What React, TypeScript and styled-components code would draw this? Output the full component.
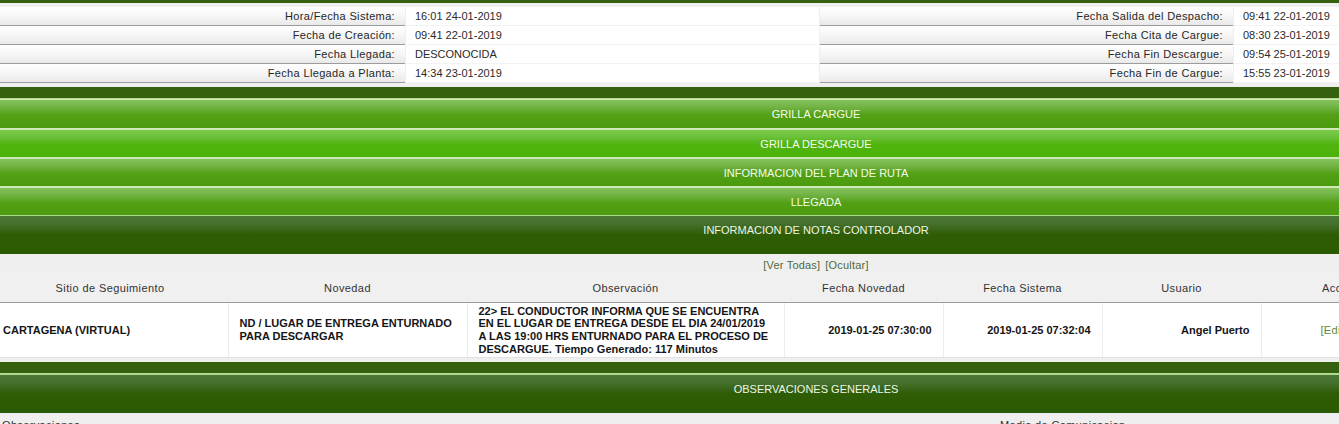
import styled, { createGlobalStyle } from "styled-components";

const GlobalStyle = createGlobalStyle`
  html, body {
    margin: 0;
    padding: 0;
    background: #efefef;
    overflow: hidden;
  }
  body {
    font-family: "Liberation Sans", Arial, sans-serif;
    font-size: 11px;
    color: #333;
  }
`;

const Viewport = styled.div`
  width: 1339px;
  height: 424px;
  overflow: hidden;
`;

// the sheet is wider than the window (the notes table overflows), so
// centred bars are centred on 1632px, not on the viewport
const Sheet = styled.div`
  width: 1632px;
`;

const TopBar = styled.div`
  height: 3px;
  background: #35610f;
  margin-bottom: 4px;
`;

const InfoGrid = styled.div`
  display: grid;
  width: 1339px;
  grid-template-columns: 405px 413px 413px 1fr;
  grid-auto-rows: 19px;
  column-gap: 1px;
  margin-bottom: 4px;
`;

const InfoLabel = styled.div`
  box-sizing: border-box;
  text-align: right;
  padding: 0 10px 0 0;
  line-height: 18px;
  letter-spacing: 0.35px;
  color: #262626;
  background: linear-gradient(to bottom, #ffffff 0%, #f6f6f6 50%, #e9e9e9 100%);
  border-bottom: 1px solid #9c9c9c;
  white-space: nowrap;
`;

const InfoValue = styled.div`
  box-sizing: border-box;
  padding: 0 0 0 9px;
  line-height: 18px;
  color: #2a2a2a;
  background: #fff;
  border-bottom: 1px solid #f3f3f3;
  white-space: nowrap;
`;

const Divider = styled.div`
  height: 11px;
  background: #35610f;
  border-bottom: 1px solid #b4dd92;
`;

const Accordion = styled.div`
  display: flex;
  flex-flow: column nowrap;
`;

const SectionHeader = styled.div<{ $bright?: boolean }>`
  height: 27px;
  line-height: 28px;
  text-align: center;
  color: #f4fcec;
  border-top: 2px solid #cfeab8;
  background: ${p =>
    p.$bright
      ? "linear-gradient(to bottom, #7dca4c 0%, #6cc13a 25%, #4fb30c 55%, #4cb309 100%)"
      : "linear-gradient(to bottom, #85c25c 0%, #72b345 25%, #52a014 55%, #4c9a0e 100%)"};

  &:first-of-type {
    border-top-width: 1px;
    height: 28px;
  }
`;

const DarkHeader = styled.div`
  height: 38px;
  line-height: 28px;
  text-align: center;
  color: #eef6e6;
  border-top: 1px solid #a9d98b;
  background: linear-gradient(to bottom, #4c7835 0%, #467231 18%, #2f5d06 48%, #2a5a01 100%);
`;

const LinksRow = styled.div`
  height: 19px;
  padding-top: 3px;
  box-sizing: border-box;
  line-height: 16px;
  text-align: center;
  color: #4f6a3b;
  letter-spacing: 0.2px;

  span + span {
    margin-left: 5px;
  }
`;

const NotesTable = styled.table`
  margin-left: -8px;
  border-collapse: collapse;
  table-layout: fixed;
  width: 1439px;
`;

const HeadCell = styled.th`
  height: 29px;
  padding: 0;
  font-weight: normal;
  text-align: center;
  letter-spacing: 0.4px;
  color: #333;
  background: #f0f0f0;
  border-bottom: 1px solid #9a9a9a;
  white-space: nowrap;
`;

const DataCell = styled.td<{ $align?: "left" | "right" }>`
  height: 55px;
  padding: 0 11px;
  box-sizing: border-box;
  background: #fff;
  font-weight: bold;
  color: #151515;
  line-height: 12.6px;
  vertical-align: middle;
  text-align: ${p => p.$align ?? "left"};
  border-left: 1px solid #ececec;
  border-bottom: 1px solid #e2e2e2;

  &:first-child {
    border-left: none;
  }
`;

const ActionCell = styled(DataCell)`
  padding-left: 59px;
`;

const EditLink = styled.span`
  font-weight: normal;
  letter-spacing: 0.3px;
  color: #5b8a3c;
`;

const Gap = styled.div`
  height: 4px;
`;

const BottomHead = styled.div`
  display: grid;
  grid-template-columns: 1000px 1fr;
  line-height: 24px;
  letter-spacing: 0.35px;
  color: #333;
  white-space: nowrap;
`;

const BottomCell = styled.div<{ $pad: number }>`
  padding-left: ${p => p.$pad}px;
`;

const leftInfo = [
  ["Hora/Fecha Sistema:", "16:01 24-01-2019"],
  ["Fecha de Creación:", "09:41 22-01-2019"],
  ["Fecha Llegada:", "DESCONOCIDA"],
  ["Fecha Llegada a Planta:", "14:34 23-01-2019"],
];

const rightInfo = [
  ["Fecha Salida del Despacho:", "09:41 22-01-2019"],
  ["Fecha Cita de Cargue:", "08:30 23-01-2019"],
  ["Fecha Fin Descargue:", "09:54 25-01-2019"],
  ["Fecha Fin de Cargue:", "15:55 23-01-2019"],
];

const columns = [236, 239, 317, 159, 159, 159, 170];

function App(): JSX.Element {
  return (
    <Viewport>
      <GlobalStyle />
      <Sheet>
        <TopBar />
        <InfoGrid>
          {leftInfo.flatMap((row, i) => [
            <InfoLabel key={`l${i}`}>{row[0]}</InfoLabel>,
            <InfoValue key={`v${i}`}>{row[1]}</InfoValue>,
            <InfoLabel key={`rl${i}`}>{rightInfo[i][0]}</InfoLabel>,
            <InfoValue key={`rv${i}`}>{rightInfo[i][1]}</InfoValue>,
          ])}
        </InfoGrid>
        <Divider />
        <Accordion>
          <SectionHeader>GRILLA CARGUE</SectionHeader>
          <SectionHeader $bright>GRILLA DESCARGUE</SectionHeader>
          <SectionHeader>INFORMACION DEL PLAN DE RUTA</SectionHeader>
          <SectionHeader>LLEGADA</SectionHeader>
          <DarkHeader>INFORMACION DE NOTAS CONTROLADOR</DarkHeader>
        </Accordion>
        <LinksRow>
          <span>[Ver Todas]</span>
          <span>[Ocultar]</span>
        </LinksRow>
        <NotesTable>
          <colgroup>
            {columns.map((w, i) => (
              <col key={i} style={{ width: w }} />
            ))}
          </colgroup>
          <thead>
            <tr>
              <HeadCell>Sitio de Seguimiento</HeadCell>
              <HeadCell>Novedad</HeadCell>
              <HeadCell>Observación</HeadCell>
              <HeadCell>Fecha Novedad</HeadCell>
              <HeadCell>Fecha Sistema</HeadCell>
              <HeadCell>Usuario</HeadCell>
              <HeadCell>Acciones</HeadCell>
            </tr>
          </thead>
          <tbody>
            <tr>
              <DataCell>CARTAGENA (VIRTUAL)</DataCell>
              <DataCell>ND / LUGAR DE ENTREGA ENTURNADO PARA DESCARGAR</DataCell>
              <DataCell>
                22&gt; EL CONDUCTOR INFORMA QUE SE ENCUENTRA EN EL LUGAR DE ENTREGA DESDE EL DIA 24/01/2019 A LAS
                19:00 HRS ENTURNADO PARA EL PROCESO DE DESCARGUE. Tiempo Generado: 117 Minutos
              </DataCell>
              <DataCell $align="right">2019-01-25 07:30:00</DataCell>
              <DataCell $align="right">2019-01-25 07:32:04</DataCell>
              <DataCell $align="right">Angel Puerto</DataCell>
              <ActionCell>
                <EditLink>[Editar]</EditLink>
              </ActionCell>
            </tr>
          </tbody>
        </NotesTable>
        <Gap />
        <Divider />
        <DarkHeader>OBSERVACIONES GENERALES</DarkHeader>
        <BottomHead>
          <BottomCell $pad={2}>Observaciones</BottomCell>
          <BottomCell $pad={0}>Medio de Comunicacion</BottomCell>
        </BottomHead>
      </Sheet>
    </Viewport>
  );
}

export default App;
